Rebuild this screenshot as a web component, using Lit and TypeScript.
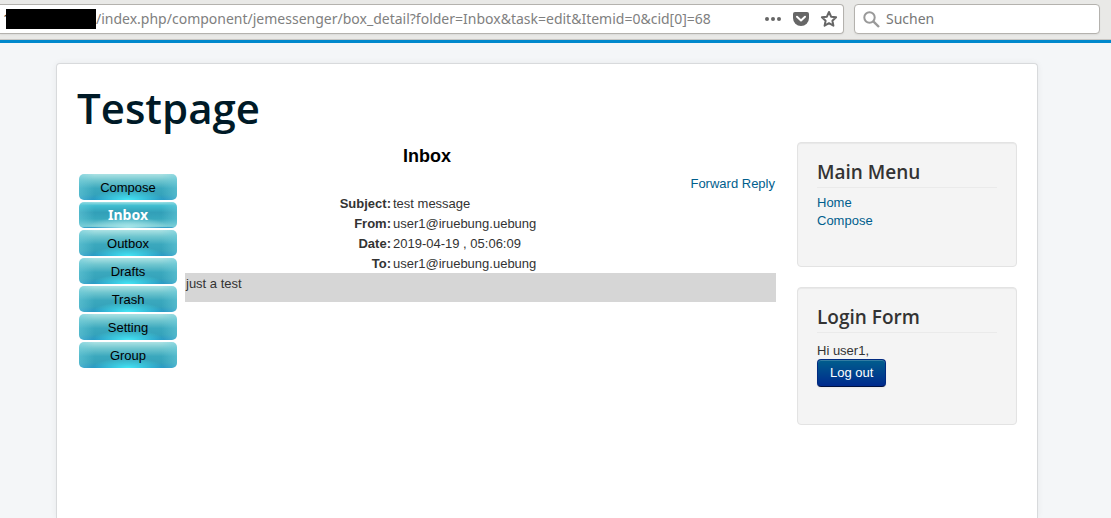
import { LitElement, html, css } from "lit";
import { customElement } from "lit/decorators.js";
import { classMap } from "lit/directives/class-map.js";

@customElement("browser-bar")
class BrowserBar extends LitElement {
  static styles = css`
    :host { display: block; }
    .bar {
      display: flex; gap: 10px; padding: 4px 11px 5px 0;
      background: #e9e9e7; border-bottom: 1px solid #c8c6c3;
    }
    .field {
      display: flex; align-items: center; box-sizing: border-box; height: 30px;
      background: #fff; border: 1px solid #b4b2ae; border-radius: 4px;
      box-shadow: 0 1px 2px rgba(0, 0, 0, 0.06);
    }
    .address { flex: 1; border-left: 0; border-radius: 0 4px 4px 0; padding-right: 4px; }
    .search { flex: 0 1 246px; padding: 0 8px; gap: 6px; }
    .scheme { box-sizing: border-box; width: 6px; padding-left: 3px; font: 14px/20px "Noto Sans", sans-serif; color: #333; }
    .mask { position: relative; flex: none; width: 90px; height: 20px; background: #000; }
    input {
      flex: 1; min-width: 0; padding: 0; border: 0; outline: 0; background: none;
      font: 14px/20px "Noto Sans", sans-serif; color: #808080;
    }
    input::placeholder { color: #777; opacity: 1; }
    .icons { display: flex; gap: 8px; }
    button { display: flex; padding: 0; border: 0; background: none; }
    svg { display: block; }
  `;

  render() {
    return html`
      <div class="bar">
        <div class="field address">
          <span class="scheme">1</span><span class="mask"></span>
          <input type="text" aria-label="Address"
            value="/index.php/component/jemessenger/box_detail?folder=Inbox&task=edit&Itemid=0&cid[0]=68" />
          <div class="icons">
            <button aria-label="Page actions">
              <svg width="20" height="20" viewBox="0 0 20 20" fill="#666">
                <circle cx="4" cy="10" r="2" /><circle cx="10" cy="10" r="2" /><circle cx="16" cy="10" r="2" />
              </svg>
            </button>
            <button aria-label="Save to Pocket">
              <svg width="20" height="20" viewBox="0 0 20 20">
                <path fill="#666" d="M4 3h12a2 2 0 0 1 2 2v4a8 8 0 0 1-16 0V5a2 2 0 0 1 2-2z" />
                <path fill="none" stroke="#fff" stroke-width="2" stroke-linecap="round" stroke-linejoin="round" d="M6 7.800l4 3.700 4-3.700" />
              </svg>
            </button>
            <button aria-label="Bookmark this page">
              <svg width="20" height="20" viewBox="0 0 20 20">
                <path fill="none" stroke="#666" stroke-width="2" stroke-linejoin="round"
                  d="M10 3l2.100 4.700 5 .6-3.700 3.400 1 5-4.400-2.500-4.400 2.500 1-5-3.700-3.400 5-.6z" />
              </svg>
            </button>
          </div>
        </div>
        <label class="field search">
          <svg width="17" height="17" viewBox="0 0 17 17" fill="none" stroke="#999" stroke-width="2">
            <circle cx="6.500" cy="6.500" r="5.200" /><path d="M10.300 10.300l5.700 5.700" stroke-width="2.400" />
          </svg>
          <input type="text" placeholder="Suchen" aria-label="Suchen" />
        </label>
      </div>
    `;
  }
}

@customElement("side-module")
class SideModule extends LitElement {
  static properties = { heading: { type: String } };
  declare heading: string;
  static styles = css`
    :host {
      display: block; padding: 19px 19px 36px; border: 1px solid #e3e3e3; border-radius: 4px;
      background: #f4f4f4; box-shadow: inset 0 1px 1px rgba(0, 0, 0, 0.05);
    }
    h3 {
      margin: 0 0 6px; padding-bottom: 5px; border-bottom: 1px solid #eaeaea;
      font: 600 19px/20px "Open Sans", sans-serif; color: #333;
    }
  `;
  render() {
    return html`<h3>${this.heading}</h3><slot></slot>`;
  }
}

@customElement("app-root")
class AppRoot extends LitElement {
  static styles = css`
    :host {
      display: flex; flex-direction: column; min-height: 100vh; background: #f4f6f8;
      font: 13px/18px "Liberation Sans", Arial, sans-serif; color: #333;
    }
    a { color: #005e8d; text-decoration: none; }
    .page {
      flex: 1; display: flex; justify-content: center;
      border-top: 3px solid #0088cc; padding: 20px 17px 0 0;
    }
    .sheet {
      box-sizing: border-box; width: 100%; max-width: 982px; padding: 20px 20px 0;
      background: #fff; border: 1px solid #d8dadc; border-bottom: 0; border-radius: 4px 4px 0 0;
      box-shadow: 0 0 6px rgba(0, 0, 0, 0.06);
    }
    h1 { margin: 0 0 10px; font: 600 42px/48px "Open Sans", sans-serif; color: #001a27; }
    .columns { display: grid; grid-template-columns: 1fr 220px; gap: 20px; }
    h2 { margin: 0 0 4px; font-size: 18px; line-height: 28px; text-align: center; color: #000; }
    .messenger { display: grid; grid-template-columns: 98px 1fr; gap: 8px; padding: 0 1px 0 2px; }
    nav { display: flex; flex-direction: column; gap: 2px; }
    .tab {
      display: block; height: 26px; border-radius: 5px; line-height: 28px; text-align: center; color: #000;
      background:
        radial-gradient(ellipse 36px 10px at 50% 100%, #45e6f4, rgba(69, 230, 244, 0)),
        linear-gradient(90deg, rgba(110, 205, 220, 0.5), rgba(110, 205, 220, 0) 16%, rgba(110, 205, 220, 0) 84%, rgba(110, 205, 220, 0.5)),
        linear-gradient(#ace2e4, #70c6cf 25%, #3ba8bd 55%, #35a3bb 80%, #2696c4);
    }
    .tab.current {
      font: bold 14px/26px "Noto Sans", sans-serif; color: #fff;
      background:
        radial-gradient(ellipse 40px 10px at 50% 96%, #a5e5e9, rgba(165, 229, 233, 0)),
        linear-gradient(90deg, rgba(110, 205, 220, 0.5), rgba(110, 205, 220, 0) 16%, rgba(110, 205, 220, 0) 84%, rgba(110, 205, 220, 0.5)),
        linear-gradient(#a0e1e5, #40bdd0 14%, #329fb8 40%, #38a8bd 65%, #80ced5 94%, #2695c4 96%);
    }
    .actions { padding: 1px 1px 0 0; text-align: right; }
    table { width: 100%; border-collapse: collapse; }
    th, td { padding: 2px 1px 0; }
    th { width: 205px; text-align: right; }
    td { text-align: left; }
    .body { min-height: 26px; padding: 2px 1px 1px; background: #d6d6d6; }
    aside { display: flex; flex-direction: column; gap: 20px; }
    ul { margin: 0; padding: 0; list-style: none; }
    .hello { margin: 0; padding-top: 3px; line-height: 17px; }
    form { margin: 0; padding-bottom: 1px; }
    .logout {
      display: block; height: 28px; padding: 0 12px; border: 1px solid #002a80; border-color: #002a80 #002a80 #001040;
      border-radius: 4px; background: linear-gradient(#005e8d, #002a8d); color: #fff;
      font: 13px/18px "Liberation Sans", Arial, sans-serif;
      box-shadow: inset 0 1px 0 rgba(255, 255, 255, 0.2), 0 1px 2px rgba(0, 0, 0, 0.05);
    }
  `;

  private tabs = ["Compose", "Inbox", "Outbox", "Drafts", "Trash", "Setting", "Group"];
  private details = [
    ["Subject:", "test message"],
    ["From:", "user1@iruebung.uebung"],
    ["Date:", "2019-04-19 , 05:06:09"],
    ["To:", "user1@iruebung.uebung"],
  ];

  render() {
    return html`
      <browser-bar></browser-bar>
      <div class="page">
        <div class="sheet">
          <h1>Testpage</h1>
          <div class="columns">
            <main>
              <h2>Inbox</h2>
              <div class="messenger">
                <nav>
                  ${this.tabs.map(
                    (t) => html`<a href="#" class=${classMap({ tab: true, current: t === "Inbox" })}>${t}</a>`
                  )}
                </nav>
                <section>
                  <div class="actions"><a href="#">Forward</a> <a href="#">Reply</a></div>
                  <table>
                    ${this.details.map(([k, v]) => html`<tr><th scope="row">${k}</th><td>${v}</td></tr>`)}
                  </table>
                  <div class="body">just a test</div>
                </section>
              </div>
            </main>
            <aside>
              <side-module heading="Main Menu">
                <ul>
                  <li><a href="#">Home</a></li>
                  <li><a href="#">Compose</a></li>
                </ul>
              </side-module>
              <side-module heading="Login Form">
                <form @submit=${(e: Event) => e.preventDefault()}>
                  <p class="hello">Hi user1,</p>
                  <button class="logout">Log out</button>
                </form>
              </side-module>
            </aside>
          </div>
        </div>
      </div>
    `;
  }
}
